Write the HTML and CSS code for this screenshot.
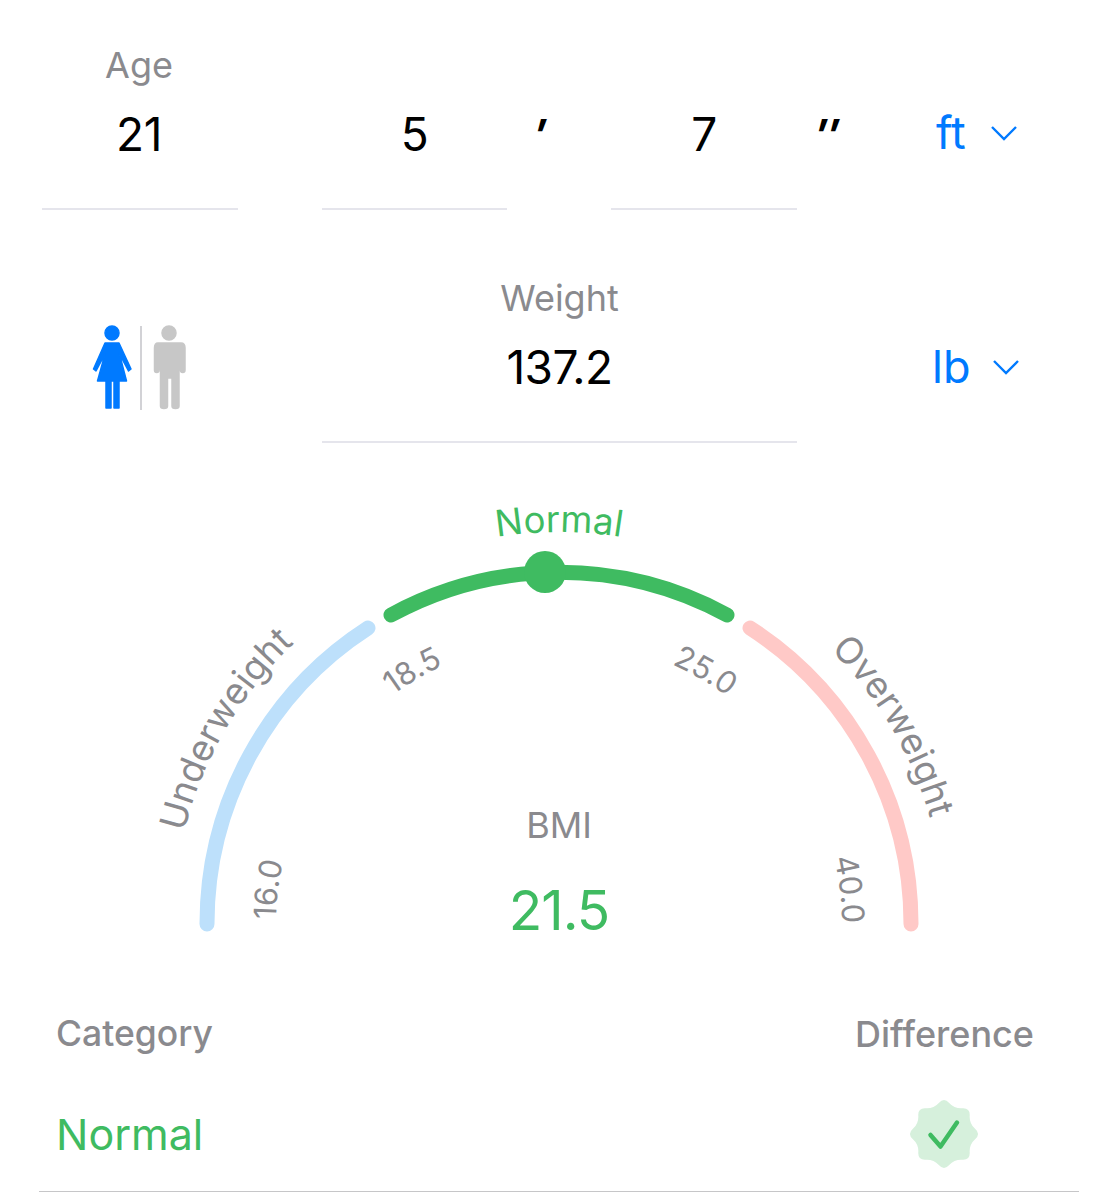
FILE: index.html
```html
<!DOCTYPE html>
<html lang="en">
<head>
  <meta charset="UTF-8">
  <meta name="viewport" content="width=device-width, initial-scale=1.0">
  <title>BMI Calculator</title>
  <link rel="stylesheet" href="styles.css">
</head>
<body>
  <div class="calculator">
    <div class="row row-height">
      <div class="field field-age">
        <div class="field-label">Age</div>
        <div class="field-value">21</div>
      </div>
      <div class="field field-feet">
        <div class="field-value">5</div>
      </div>
      <div class="mark mark-feet">′</div>
      <div class="field field-inches">
        <div class="field-value">7</div>
      </div>
      <div class="mark mark-inches">″</div>
      <div class="unit unit-height">
        <span>ft</span>
        <svg class="chevron" viewBox="0 0 28 16"><path d="M2 2 L14 14 L26 2"/></svg>
      </div>
    </div>

    <div class="row row-weight">
      <svg class="gender" viewBox="0 0 100 90">
        <g class="woman">
          <circle cx="22" cy="10" r="7"/>
          <path d="M15 20 L29 20 L41 46 L38.5 48 L29.5 31 L36.5 58 L7.5 58 L15 31 L6 48 L3.5 46 Z"/>
          <path d="M16 58 L21 58 L21 85 L16 85 Z M24 58 L29 58 L29 85 L24 85 Z"/>
        </g>
        <rect class="divider" x="50.2" y="3" width="1.6" height="84"/>
        <g class="man">
          <circle cx="79" cy="10" r="7"/>
          <path d="M68 20 L91 20 Q95 20 95 25 L95 47 Q95 49.5 92.7 49.5 Q90.5 49.5 90.5 47 L90.5 32 L89 32 L89 83 Q89 85.5 85.5 85.5 Q82 85.5 82 83 L82 55 L77.5 55 L77.5 83 Q77.5 85.5 74 85.5 Q70.5 85.5 70.5 83 L70.5 32 L69 32 L69 47 Q69 49.5 66.7 49.5 Q64.5 49.5 64.5 47 L64.5 25 Q64.5 20 68 20 Z"/>
        </g>
      </svg>
      <div class="field field-weight">
        <div class="field-label">Weight</div>
        <div class="field-value">137.2</div>
      </div>
      <div class="unit unit-weight">
        <span>lb</span>
        <svg class="chevron" viewBox="0 0 28 16"><path d="M2 2 L14 14 L26 2"/></svg>
      </div>
    </div>

    <svg class="gauge" viewBox="0 490 1117 470">
      <defs>
        <path id="ring-outer" d="M173 924 A386 386 0 0 1 945 924"/>
        <path id="ring-top" d="M167 924 A392 392 0 0 1 951 924"/>
        <path id="ring-inner" d="M276 924 A283 283 0 0 1 842 924"/>
      </defs>

      <path class="arc arc-under" d="M207 924 A352 352 0 0 1 368 628"/>
      <path class="arc arc-normal" d="M391 615 A352 352 0 0 1 727 615"/>
      <path class="arc arc-over" d="M750 628 A352 352 0 0 1 911 924"/>
      <circle class="dot" cx="545" cy="572" r="21"/>

      <text class="zone zone-normal"><textPath href="#ring-top" startOffset="50%">Normal</textPath></text>
      <text class="zone"><textPath href="#ring-outer" startOffset="16.8%">Underweight</textPath></text>
      <text class="zone"><textPath href="#ring-outer" startOffset="83%">Overweight</textPath></text>

      <text class="tick"><textPath href="#ring-inner" startOffset="3.8%">16.0</textPath></text>
      <text class="tick"><textPath href="#ring-inner" startOffset="33.3%">18.5</textPath></text>
      <text class="tick"><textPath href="#ring-inner" startOffset="66.7%">25.0</textPath></text>
      <text class="tick"><textPath href="#ring-inner" startOffset="96.2%">40.0</textPath></text>

      <text class="bmi-label" x="559" y="838">BMI</text>
      <text class="bmi-value" x="559" y="930">21.5</text>
    </svg>

    <div class="summary">
      <div class="summary-col">
        <div class="summary-label">Category</div>
        <div class="summary-value">Normal</div>
      </div>
      <div class="summary-col summary-right">
        <div class="summary-label">Difference</div>
        <svg class="badge" viewBox="-36 -36 72 72">
          <path class="badge-shape" d="M-5.2 -31.1 Q0 -37 5.2 -31.1 Q10.45 -25.2 18.3 -25.7 Q26.2 -26.2 25.7 -18.3 Q25.2 -10.45 31.1 -5.2 Q37 0 31.1 5.2 Q25.2 10.45 25.7 18.3 Q26.2 26.2 18.3 25.7 Q10.45 25.2 5.2 31.1 Q0 37 -5.2 31.1 Q-10.45 25.2 -18.3 25.7 Q-26.2 26.2 -25.7 18.3 Q-25.2 10.45 -31.1 5.2 Q-37 0 -31.1 -5.2 Q-25.2 -10.45 -25.7 -18.3 Q-26.2 -26.2 -18.3 -25.7 Q-10.45 -25.2 -5.2 -31.1 Z"/>
          <path class="badge-check" d="M-13.5 1 L-3.5 12.5 L13 -11.5"/>
        </svg>
      </div>
    </div>
  </div>
</body>
</html>
```

FILE: styles.css
```css
body {
  font-family: Inter, "Liberation Sans", sans-serif;
  background-color: #ffffff;
  margin: 0;
  padding: 0;
}

.calculator {
  width: 1117px;
  height: 1200px;
  overflow: hidden;
}

.row {
  display: flex;
  align-items: flex-start;
}

.row-height {
  height: 210px;
  padding-left: 42px;
  padding-top: 45px;
  box-sizing: border-box;
}

.row-weight {
  height: 232px;
  padding-top: 68px;
  box-sizing: border-box;
}

.field {
  height: 165px;
  box-sizing: border-box;
  border-bottom: 2px solid #e5e5ec;
  text-align: center;
  display: flex;
  flex-direction: column;
  justify-content: flex-end;
  padding-bottom: 47px;
}

.field-age {
  width: 196px;
  margin-right: 84px;
  padding-right: 2px;
}

.field-feet {
  width: 185px;
}

.field-inches {
  width: 186px;
}

.field-weight {
  width: 475px;
  margin-left: 132px;
  height: 165px;
}

.field-label {
  color: #8a8a8e;
  font-size: 36px;
  line-height: 40px;
  margin-bottom: 22px;
}

.field-value {
  color: #000000;
  font-size: 46px;
  line-height: 54px;
  letter-spacing: -0.5px;
}

.mark {
  color: #000000;
  font-size: 44px;
  line-height: 54px;
  font-style: italic;
  font-weight: 700;
  margin-top: 63px;
}

.mark-feet {
  width: 104px;
  padding-left: 27px;
  box-sizing: border-box;
}

.mark-inches {
  width: 60px;
  padding-left: 18px;
  box-sizing: border-box;
}

.unit {
  display: flex;
  align-items: center;
  color: #007aff;
  font-size: 45px;
  line-height: 54px;
}

.unit-height {
  gap: 24px;
  margin-top: 61px;
  margin-left: 79px;
}

.unit-weight {
  gap: 22px;
  margin-top: 62px;
  margin-left: 135px;
}

.chevron {
  width: 28px;
  height: 16px;
  fill: none;
  stroke: #007aff;
  stroke-width: 2.4;
}

.gender {
  width: 100px;
  height: 90px;
  margin-left: 90px;
  margin-top: 45px;
  flex-shrink: 0;
}

.woman {
  fill: #007aff;
  stroke: #007aff;
  stroke-width: 1.5;
  stroke-linejoin: round;
}

.man {
  fill: #c7c7c7;
  stroke: #c7c7c7;
  stroke-width: 1.5;
  stroke-linejoin: round;
}

.divider {
  fill: #c7c7cc;
}

.gauge {
  display: block;
  width: 1117px;
  height: 470px;
  margin-top: 48px;
}

.arc {
  fill: none;
  stroke-width: 15;
  stroke-linecap: round;
}

.arc-under {
  stroke: #bde0fb;
}

.arc-normal {
  stroke: #3fbb61;
}

.arc-over {
  stroke: #ffc9c7;
}

.dot {
  fill: #3fbb61;
}

.zone {
  fill: #8a8a8e;
  font-size: 36.5px;
  text-anchor: middle;
}

.zone-normal {
  fill: #3fbb61;
}

.tick {
  fill: #8a8a8e;
  font-size: 31px;
  text-anchor: middle;
}

.bmi-label {
  fill: #8a8a8e;
  font-size: 36px;
  text-anchor: middle;
}

.bmi-value {
  fill: #3fbb61;
  font-size: 55px;
  letter-spacing: -1px;
  text-anchor: middle;
}

.summary {
  display: flex;
  justify-content: space-between;
  width: 1040px;
  height: 232px;
  margin-left: 39px;
  padding: 54px 45px 0 17px;
  box-sizing: border-box;
  border-bottom: 1px solid #c6c6c8;
}

.summary-col {
  display: flex;
  flex-direction: column;
}

.summary-right {
  align-items: center;
}

.summary-label {
  color: #8a8a8e;
  font-size: 35.5px;
  line-height: 40px;
  font-weight: 500;
}

.summary-right .summary-label {
  font-size: 36px;
}

.summary-value {
  color: #3fbb61;
  font-size: 43px;
  line-height: 54px;
  margin-top: 53px;
}

.badge {
  width: 72px;
  height: 72px;
  margin-top: 44px;
}

.badge-shape {
  fill: #d6f0dc;
}

.badge-check {
  fill: none;
  stroke: #3fbb61;
  stroke-width: 4.5;
  stroke-linecap: round;
  stroke-linejoin: round;
}
```
